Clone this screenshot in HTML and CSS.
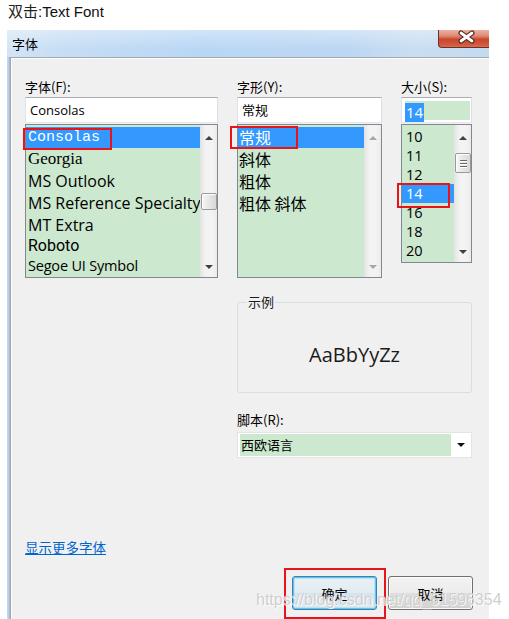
FILE: index.html
```html
<!DOCTYPE html>
<html lang="zh">
<head>
<meta charset="utf-8">
<title>字体</title>
<link rel="stylesheet" href="styles.css">
</head>
<body>
<div class="caption"><span class="cjk">双击</span>:Text Font</div>
<div class="dialog">
  <div class="titlebar">
    <span class="title">字体</span>
    <div class="close">
      <svg width="50" height="17" viewBox="0 0 50 17">
        <path d="M22 3 L33 11 M33 3 L22 11" stroke="#4a2620" stroke-width="5" stroke-linecap="round" fill="none"/>
        <path d="M22 3 L33 11 M33 3 L22 11" stroke="#ffffff" stroke-width="2.8" stroke-linecap="round" fill="none"/>
      </svg>
    </div>
  </div>
  <div class="panel">
    <div class="grid">
      <div class="lbl">字体(F):</div>
      <div class="lbl">字形(Y):</div>
      <div class="lbl">大小(S):</div>

      <div class="input latin">Consolas</div>
      <div class="input">常规</div>
      <div class="input size"><span class="sizefield"><span class="sel">14</span></span></div>

      <div class="list tall">
        <div class="items fonts">
          <div class="item r21 hl f-mono">Consolas</div>
          <div class="item r22 f-serif">Georgia</div>
          <div class="item r22 f-open">MS Outlook</div>
          <div class="item r22 f-open">MS Reference Specialty</div>
          <div class="item r22 f-open">MT Extra</div>
          <div class="item r19 f-roboto">Roboto</div>
          <div class="item r22 f-segoe">Segoe UI Symbol</div>
        </div>
        <div class="sb">
          <div class="sb-up"><span class="tri-up"></span></div>
          <div class="sb-track"><div class="thumb t-font"></div></div>
          <div class="sb-down"><span class="tri-down"></span></div>
        </div>
        <div class="redbox rb-font"></div>
      </div>

      <div class="list tall">
        <div class="items styles">
          <div class="item r21 hl">常规</div>
          <div class="item r22">斜体</div>
          <div class="item r22">粗体</div>
          <div class="item r22">粗体 斜体</div>
        </div>
        <div class="sb">
          <div class="sb-up"><span class="tri-up off"></span></div>
          <div class="sb-track"></div>
          <div class="sb-down"><span class="tri-down off"></span></div>
        </div>
        <div class="redbox rb-style"></div>
      </div>

      <div class="list short">
        <div class="items sizes">
          <div class="item r19">10</div>
          <div class="item r19">11</div>
          <div class="item r19">12</div>
          <div class="item r19 hl">14</div>
          <div class="item r19">16</div>
          <div class="item r19">18</div>
          <div class="item r19">20</div>
        </div>
        <div class="sb">
          <div class="sb-up"><span class="tri-up"></span></div>
          <div class="sb-track"><div class="thumb t-size"><i></i><i></i><i></i></div></div>
          <div class="sb-down small"><span class="tri-down"></span></div>
        </div>
        <div class="redbox rb-size"></div>
      </div>

      <fieldset class="sample">
        <legend>示例</legend>
        <div class="sample-text">AaBbYyZz</div>
      </fieldset>

      <div class="lbl script-lbl">脚本(R):</div>
      <div class="combo">
        <span class="combo-field">西欧语言</span>
        <span class="combo-btn"><span class="tri-down"></span></span>
      </div>
    </div>

    <div class="more"><a href="#">显示更多字体</a></div>

    <div class="buttons">
      <div class="okwrap"><div class="btn default">确定</div></div>
      <div class="btn">取消</div>
    </div>
  </div>
</div>
<div class="watermark">https://blog.csdn.net/qq_51596354</div>
</body>
</html>
```

FILE: styles.css
```css
* { box-sizing: border-box; }

body {
  margin: 0;
  width: 509px;
  height: 619px;
  overflow: hidden;
  background: #fff;
  position: relative;
  font-family: "Noto Sans CJK SC", sans-serif;
  color: #000;
}

.caption {
  height: 30px;
  padding-left: 8px;
  font-family: "Liberation Sans", "Noto Sans CJK SC", sans-serif;
  font-size: 15px;
  line-height: 22px;
  color: #111;
}
.caption .cjk { font-family: "Noto Sans CJK SC", sans-serif; color: #222; }

.dialog {
  margin-left: 7px;
  width: 482px;
  height: 589px;
  display: flex;
  flex-direction: column;
  background: linear-gradient(to right, #c3d9f0 0, #b5cfea 2px, #98aac0 3px);
}

.titlebar {
  height: 27px;
  flex: none;
  display: flex;
  align-items: flex-start;
  background:
    linear-gradient(to bottom, rgba(255,255,255,0.35), rgba(255,255,255,0) 70%),
    linear-gradient(to right, #d3e4f6 0%, #c6ddf5 12%, #b9d7f5 40%, #bcd7f3 70%, #cadef2 85%, #c4daf0 100%);
}
.title {
  padding: 5px 0 0 5px;
  font-size: 13px;
  line-height: 17px;
  color: #000;
}
.close {
  margin-left: auto;
  width: 51px;
  height: 18px;
  border: 1px solid #6e2f24;
  border-top: none;
  border-right: none;
  border-radius: 0 0 0 4px;
  background: linear-gradient(#eab0a2 0%, #de8a74 35%, #c9462d 55%, #cf5538 80%, #d86a4f 100%);
}
.close svg { display: block; }

.panel {
  flex: 1;
  margin-left: 3px;
  background: #f0f0f0;
  border-left: 1px solid #a3a7ad;
  border-top: 1px solid #9fa8b3;
  box-shadow: inset 1px 1px 0 #fdfdfd;
  padding: 20px 0 0 14px;
}

.grid {
  display: grid;
  grid-template-columns: 193px 145px 71px;
  column-gap: 19px;
  align-items: start;
}

.lbl {
  height: 17px;
  margin-bottom: 2px;
  font-size: 13px;
  line-height: 17px;
  color: #000;
  white-space: nowrap;
}

.input {
  height: 26px;
  border: 1px solid;
  border-color: #abadb3 #dbdfe6 #e3e9ef #e2e3ea;
  background: #fff;
  padding-left: 4px;
  font-size: 13px;
  line-height: 24px;
}
.input.latin { font-family: "Open Sans", sans-serif; }
.input.size { padding: 3px 1px 2px 3px; }
.sizefield {
  display: block;
  height: 100%;
  background: #cce8cf;
}
.sel {
  display: inline-block;
  height: 100%;
  padding: 0 1px;
  background: #3399ff;
  color: #fff;
  font-family: "Open Sans", sans-serif;
  font-size: 15px;
  line-height: 19px;
}

.list {
  position: relative;
  margin-top: 1px;
  display: flex;
  border: 1px solid #828790;
  background: #cce8cf;
}
.list.tall { height: 154px; }
.list.short { height: 139px; }

.items {
  flex: 1;
  min-width: 0;
  padding-top: 2px;
  overflow: hidden;
}
.item {
  white-space: nowrap;
  padding-left: 2px;
  font-size: 16px;
  color: #000;
}
.item.hl { background: #3399ff; color: #fff; }
.r19 { height: 19px; line-height: 19px; }
.r21 { height: 21px; line-height: 21px; }
.r22 { height: 22px; line-height: 22px; }

.f-mono { font-family: "Liberation Mono", monospace; font-size: 15px; }
.f-serif { font-family: "Liberation Serif", serif; font-size: 17px; }
.f-open { font-family: "Open Sans", sans-serif; font-size: 16px; }
.f-roboto { font-family: Roboto, sans-serif; font-size: 16px; }
.f-segoe { font-family: "Open Sans", sans-serif; font-size: 14.5px; letter-spacing: -0.2px; }

.styles .item { padding-left: 1px; font-size: 16px; }
.sizes .item { padding-left: 4px; font-family: "Open Sans", sans-serif; font-size: 14.5px; }

.sb {
  width: 17px;
  flex: none;
  display: flex;
  flex-direction: column;
  background: linear-gradient(to right, #e7e7e7, #f3f3f3 30%, #f3f3f3 70%, #ebebeb);
  border-left: 1px solid #e3e3e3;
}
.sb-up { height: 24px; display: flex; justify-content: center; align-items: center; padding-top: 2px; }
.sb-down { height: 19px; display: flex; justify-content: center; align-items: center; padding-bottom: 1px; }
.sb-track { flex: 1; }

.tri-up, .tri-down {
  width: 0;
  height: 0;
  border-left: 4px solid transparent;
  border-right: 4px solid transparent;
}
.tri-up { border-bottom: 4px solid #404040; }
.tri-down { border-top: 4px solid #404040; }
.tri-up.off { border-bottom-color: #a6a6a6; }
.tri-down.off { border-top-color: #a6a6a6; }

.thumb {
  margin-left: 0;
  width: 16px;
  border: 1px solid #9a9a9a;
  border-radius: 2px;
  background: linear-gradient(to right, #f6f6f6, #e6e6e6 50%, #d9d9d9);
  box-shadow: inset 1px 1px 0 #fff;
}
.t-font { margin-top: 44px; height: 17px; }
.t-size {
  margin-top: 4px;
  height: 20px;
  display: flex;
  flex-direction: column;
  align-items: center;
  justify-content: center;
  gap: 2px;
}
.t-size i {
  display: block;
  width: 7px;
  height: 1px;
  background: #6a6a6a;
  box-shadow: 0 1px 0 #fff;
}

.redbox {
  position: absolute;
  border: 2px solid #e8141c;
  pointer-events: none;
}
.rb-font { left: -3px; top: 3px; width: 89px; height: 22px; }
.rb-style { left: -8px; top: 1px; width: 68px; height: 23px; }
.rb-size { left: -5px; top: 58px; width: 53px; height: 25px; }

.sample {
  grid-column: 2 / 4;
  margin: 16px 0 0 0;
  padding: 0;
  border: 1px solid #d5dfe5;
  border-radius: 3px;
  min-width: 0;
}
.sample legend {
  margin-left: 9px;
  padding: 0 1px;
  font-size: 13px;
  line-height: 16px;
  color: #1a1a1a;
}
.sample-text {
  height: 82px;
  padding-top: 6px;
  display: flex;
  align-items: center;
  justify-content: center;
  font-family: "Open Sans", sans-serif;
  font-size: 20px;
  color: #1a1a1a;
}

.script-lbl {
  grid-column: 2 / 4;
  margin-top: 18px;
  margin-bottom: 4px;
}

.combo {
  grid-column: 2 / 4;
  height: 26px;
  display: flex;
  border: 1px solid #e4e4e4;
  background: #fff;
  padding: 1px 0 1px 2px;
}
.combo-field {
  flex: 1;
  background: #cce8cf;
  padding-left: 1px;
  font-size: 13px;
  line-height: 22px;
}
.combo-btn {
  width: 20px;
  display: flex;
  align-items: center;
  justify-content: center;
}
.combo-btn .tri-down { border-top-color: #111; }

.more {
  margin-top: 81px;
  height: 17px;
  line-height: 17px;
  font-size: 13.5px;
}
.more a {
  color: #0066cc;
  text-decoration: underline;
}

.buttons {
  margin-top: 20px;
  display: flex;
  justify-content: flex-end;
  gap: 11px;
  padding-right: 16px;
}
.okwrap { position: relative; }
.okwrap::after {
  content: "";
  position: absolute;
  left: -8px;
  top: -8px;
  width: 98px;
  height: 47px;
  border: 2px solid #e8141c;
}
.btn {
  width: 85px;
  height: 34px;
  border: 1px solid #707070;
  border-radius: 3px;
  background: linear-gradient(#f3f3f3 0%, #ececec 48%, #dddddd 52%, #d2d2d2 100%);
  box-shadow: inset 0 0 0 1px #fbfbfb;
  display: flex;
  align-items: center;
  justify-content: center;
  font-size: 13px;
  color: #000;
}
.btn.default {
  border-color: #3c7fb1;
  background: linear-gradient(#e9f1f6 0%, #e2ebf1 48%, #d6e3ec 52%, #dfe9ef 100%);
  box-shadow: inset 0 0 0 1px #63c5ee, inset 0 0 0 2px #b8e4f6;
}

.watermark {
  position: absolute;
  left: 256px;
  top: 591px;
  font-family: "Liberation Sans", sans-serif;
  font-size: 16px;
  line-height: 18px;
  color: rgba(190, 190, 190, 0.75);
  text-shadow: 0 0 1px #fff, 1px 1px 0 rgba(255,255,255,0.8);
  white-space: nowrap;
  pointer-events: none;
}
```
